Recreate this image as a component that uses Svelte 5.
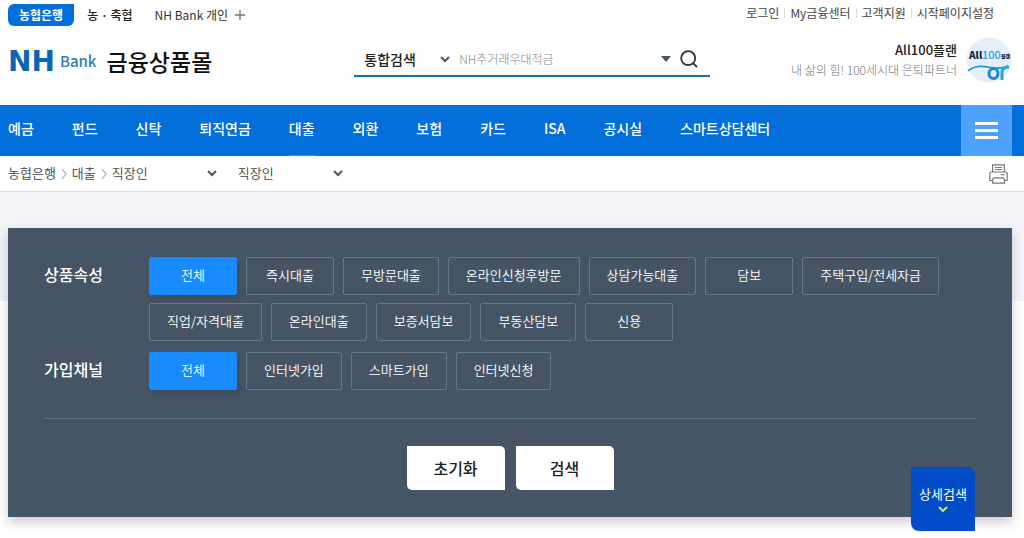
<script>
  const utilLinks = ['로그인', 'My금융센터', '고객지원', '시작페이지설정'];

  const menu = [
    '예금', '펀드', '신탁', '퇴직연금', '대출', '외환',
    '보험', '카드', 'ISA', '공시실', '스마트상담센터'
  ];
  let currentMenu = '대출';

  const groups = [
    {
      name: '상품속성',
      options: [
        '전체', '즉시대출', '무방문대출', '온라인신청후방문', '상담가능대출', '담보',
        '주택구입/전세자금', '직업/자격대출', '온라인대출', '보증서담보', '부동산담보', '신용'
      ]
    },
    {
      name: '가입채널',
      options: ['전체', '인터넷가입', '스마트가입', '인터넷신청']
    }
  ];

  let selected = groups.map(() => '전체');
  let keyword = '';

  function pick(i, option) {
    selected[i] = option;
  }

  function reset() {
    selected = groups.map(() => '전체');
  }
</script>

<header>
  <div class="top">
    <nav class="sites" aria-label="사이트">
      <a class="site on" href="#nhbank">농협은행</a>
      <a class="site bold" href="#local">농 · 축협</a>
      <a class="site" href="#personal">
        NH Bank 개인
        <svg width="10" height="10" viewBox="0 0 10 10"><path d="M5 0v10M0 5h10" stroke="#777" stroke-width="1.4" /></svg>
      </a>
    </nav>
    <ul class="util">
      {#each utilLinks as link}
        <li><a href="#util">{link}</a></li>
      {/each}
    </ul>
  </div>

  <div class="main">
    <h1>
      <a class="logo" href="#home">
        <span class="nh">NH</span>
        <span class="bank">Bank</span>
        <span class="mall">금융상품몰</span>
      </a>
    </h1>

    <form class="search" on:submit|preventDefault>
      <div class="select scope">
        <select aria-label="검색 범위">
          <option>통합검색</option>
        </select>
        <svg width="10" height="7" viewBox="0 0 10 7"><path d="M1 1l4 4 4-4" /></svg>
      </div>
      <input type="text" aria-label="검색어" placeholder="NH주거래우대적금" bind:value={keyword} />
      <button class="icon" type="button" aria-label="추천 검색어">
        <svg width="10" height="6" viewBox="0 0 10 6"><path d="M0 0h10L5 6z" fill="#44546a" /></svg>
      </button>
      <button class="icon" type="submit" aria-label="검색">
        <svg width="18" height="18" viewBox="0 0 18 18" fill="none" stroke="#333" stroke-width="1.8">
          <circle cx="8.2" cy="8.2" r="7" />
          <path d="M13 13.2l4 3.8" />
        </svg>
      </button>
    </form>

    <a class="plan" href="#all100">
      <span class="plan-text">
        <strong>All100플랜</strong>
        <span>내 삶의 힘! 100세시대 은퇴파트너</span>
      </span>
      <svg width="46" height="46" viewBox="0 0 46 46">
        <circle cx="23" cy="23" r="22.5" fill="#e6eefa" />
        <text x="3" y="22" class="mark dark">All</text>
        <text x="16" y="22" class="mark light">100</text>
        <text x="35" y="21" class="mark tiny">플랜</text>
        <path d="M2 34C9 28 16 29 25 30.500S38 31 42 29" fill="none" stroke="#1c93dd" stroke-width="1.600" />
        <ellipse cx="27.5" cy="36.500" rx="4.5" ry="5" fill="none" stroke="#1f86d8" stroke-width="3" />
        <path d="M36 43V35c0-3 2-5 7-5" fill="none" stroke="#22a5e6" stroke-width="3" />
      </svg>
    </a>
  </div>
</header>

<div class="gnb">
  <nav aria-label="주 메뉴">
    {#each menu as item}
      <a href="#menu" class:current={item === currentMenu}>{item}</a>
    {/each}
  </nav>
  <button class="all-menu" type="button" aria-label="전체메뉴">
    <span></span><span></span><span></span>
  </button>
</div>

<div class="path">
  <a href="#nhbank">농협은행</a>
  <svg class="sep" width="6" height="12" viewBox="0 0 6 12"><path d="M1 1l4 5-4 5" /></svg>
  <a href="#loan">대출</a>
  <svg class="sep" width="6" height="12" viewBox="0 0 6 12"><path d="M1 1l4 5-4 5" /></svg>
  <div class="select depth">
    <select aria-label="대출 분류">
      <option>직장인</option>
    </select>
    <svg width="10" height="7" viewBox="0 0 10 7"><path d="M1 1l4 4 4-4" /></svg>
  </div>
  <div class="select depth">
    <select aria-label="대출 상세 분류">
      <option>직장인</option>
    </select>
    <svg width="10" height="7" viewBox="0 0 10 7"><path d="M1 1l4 4 4-4" /></svg>
  </div>
  <button class="icon print" type="button" aria-label="인쇄">
    <svg width="19" height="20" viewBox="0 0 19 20" fill="none" stroke="#777" stroke-width="1.2">
      <path d="M3.600 8V.8h11.800V8" />
      <path d="M6 3.500h7M6 5.500h7" stroke-width="1" />
      <path d="M3.600 16.500H.8V9.200L2 8h15l1.200 1.200v7.300h-2.800" />
      <path d="M12 10.700h3.500" />
      <path d="M3.600 19.200v-4l1.200-1.400h9.400l1.200 1.400v4z" />
    </svg>
  </button>
</div>

<main>
  <section class="panel">
    {#each groups as group, i}
      <div class="group" role="group" aria-labelledby="group-{i}">
        <h2 id="group-{i}">{group.name}</h2>
        <div class="options">
          {#each group.options as option}
            <button
              type="button"
              class="chip"
              class:on={selected[i] === option}
              aria-pressed={selected[i] === option}
              on:click={() => pick(i, option)}
            >{option}</button>
          {/each}
        </div>
      </div>
    {/each}

    <div class="actions">
      <button type="button" on:click={reset}>초기화</button>
      <button type="button">검색</button>
    </div>

    <button class="detail" type="button">
      상세검색
      <svg width="10" height="7" viewBox="0 0 10 7"><path d="M1 1l4 4 4-4" fill="none" stroke="#d5ec3c" stroke-width="2" /></svg>
    </button>
  </section>
</main>

<style>
  :global(body) {
    background: #fff;
    color: #333;
    font-family: "Noto Sans CJK KR", "Noto Sans", sans-serif;
    font-size: 13px;
    line-height: 20px;
  }
  a {
    color: inherit;
    text-decoration: none;
  }
  button, input, select {
    margin: 0;
    padding: 0;
    border: 0;
    background: none;
    color: inherit;
    font: inherit;
  }
  button {
    cursor: pointer;
  }
  h1, h2, ul {
    margin: 0;
    padding: 0;
    list-style: none;
  }
  .icon {
    display: flex;
    align-items: center;
  }

  .top, .main, .gnb, .path {
    display: flex;
    padding: 0 12px 0 8px;
  }
  .top {
    justify-content: space-between;
    height: 30px;
    font-size: 12px;
  }
  .sites {
    display: flex;
    align-items: center;
    gap: 22px;
  }
  .site {
    display: flex;
    align-items: center;
    gap: 7px;
    line-height: 22px;
  }
  .site.bold {
    font-weight: 500;
    color: #222;
  }
  .site.on {
    margin-right: -9px;
    padding: 0 11px;
    border-radius: 6px 0 6px 6px;
    background: #036fd8;
    color: #fff;
    font-weight: 700;
  }
  .util {
    display: flex;
    align-items: center;
    padding: 0 18px 4px 0;
    color: #444;
  }
  .util li {
    display: flex;
    align-items: center;
  }
  .util li + li::before {
    content: "";
    height: 10px;
    margin: 0 5px;
    border-left: 1px solid #ddd;
  }

  .main {
    align-items: center;
    box-sizing: border-box;
    height: 75px;
    padding-bottom: 15px;
  }
  .logo {
    display: flex;
    align-items: center;
    padding-top: 2px;
    white-space: nowrap;
  }
  .nh {
    color: #0b65b0;
    font: 700 28px "DejaVu Sans", sans-serif;
  }
  .bank {
    margin: 0 10px 0 5px;
    color: #2f7dbd;
    font-size: 15px;
    font-weight: 500;
  }
  .mall {
    color: #111;
    font-size: 23px;
    font-weight: 500;
    line-height: 40px;
  }
  .search {
    display: flex;
    align-items: center;
    flex: 0 1 356px;
    box-sizing: border-box;
    height: 34px;
    margin: 0 20px 0 142px;
    padding-right: 12px;
    border-bottom: 2px solid #1a6cb8;
    gap: 9px;
  }
  .search input {
    flex: 1;
    min-width: 0;
    outline: none;
    font-size: 12px;
    font-weight: 300;
  }
  .search input::placeholder {
    color: #888;
    opacity: 1;
  }
  .select {
    display: grid;
    align-items: center;
  }
  .select select {
    grid-area: 1 / 1;
    appearance: none;
    outline: none;
  }
  .select svg {
    grid-area: 1 / 1;
    justify-self: end;
    pointer-events: none;
    fill: none;
    stroke: #555;
    stroke-width: 2;
  }
  .scope {
    width: 96px;
  }
  .scope select {
    padding-left: 10px;
    color: #222;
    font-size: 14px;
    font-weight: 500;
  }
  .plan {
    display: flex;
    align-items: center;
    gap: 9px;
    margin-left: auto;
    white-space: nowrap;
  }
  .plan-text {
    display: grid;
    text-align: right;
    color: #777;
    font-size: 12px;
    font-weight: 300;
  }
  .plan-text strong {
    color: #222;
    font-size: 13px;
    font-weight: 500;
  }
  .mark {
    font-size: 10px;
    font-weight: 900;
  }
  .dark {
    fill: #12263f;
  }
  .light {
    fill: #2aa0dc;
    font-size: 11px;
    font-weight: 500;
  }
  .tiny {
    fill: #12263f;
    font-size: 5px;
  }

  .gnb {
    justify-content: space-between;
    background: #036fdb;
    color: #fff;
  }
  .gnb nav {
    display: flex;
    gap: 38px;
    font-size: 14px;
    font-weight: 500;
    line-height: 46px;
    white-space: nowrap;
  }
  .gnb nav a {
    padding-bottom: 4px;
    border-bottom: 1px solid transparent;
  }
  .gnb nav a.current {
    border-color: #4a8fd6;
  }
  .all-menu {
    display: flex;
    flex-direction: column;
    align-items: center;
    justify-content: center;
    gap: 4px;
    width: 51px;
    background: #4ba3fd;
  }
  .all-menu span {
    width: 23px;
    height: 3px;
    background: #fff;
  }

  .path {
    align-items: center;
    gap: 5px;
    height: 35px;
    border-bottom: 1px solid #dcdfe3;
    color: #444;
  }
  .path a, .depth select {
    padding-bottom: 2px;
    font-weight: 350;
  }
  .sep {
    fill: none;
    stroke: #aaa;
    stroke-width: 1.2;
  }
  .depth {
    width: 105px;
    margin-right: 16px;
  }
  .print {
    margin-left: auto;
    padding-right: 4px;
  }

  main {
    padding: 36px 12px 21px 8px;
    background: linear-gradient(#f2f4f8, #f2f4f8) no-repeat 0 0 / 100% 109px;
  }
  .panel {
    position: relative;
    padding: 29px 36px 27px;
    background: #455565;
    box-shadow: 0 5px 10px rgba(60, 50, 60, 0.25);
    color: #fff;
  }
  .group {
    display: flex;
    margin-bottom: 11px;
  }
  h2 {
    flex: none;
    width: 105px;
    font-size: 16px;
    font-weight: 500;
    line-height: 34px;
  }
  .options {
    display: flex;
    flex-wrap: wrap;
    gap: 8px 9px;
  }
  .chip {
    min-width: 88px;
    height: 38px;
    padding: 0 17px 2px;
    border: 1px solid #687786;
    border-radius: 2px;
    font-weight: 350;
  }
  .chip.on {
    border-color: #178bff;
    background: #178bff;
    box-shadow: 2px 4px 8px rgba(0, 0, 0, 0.12);
  }
  .actions {
    display: flex;
    justify-content: center;
    gap: 11px;
    margin-top: 28px;
    padding-top: 27px;
    border-top: 1px solid #64717f;
  }
  .actions button {
    width: 98px;
    height: 44px;
    border-radius: 0 5px 0 5px;
    background: #fff;
    color: #222;
    font-size: 16px;
    font-weight: 500;
  }
  .detail {
    position: absolute;
    right: 37px;
    bottom: -14px;
    display: flex;
    flex-direction: column;
    align-items: center;
    justify-content: center;
    gap: 2px;
    width: 64px;
    height: 64px;
    padding-bottom: 2px;
    border-radius: 0 8px 0 8px;
    background: #004cc9;
  }
</style>
